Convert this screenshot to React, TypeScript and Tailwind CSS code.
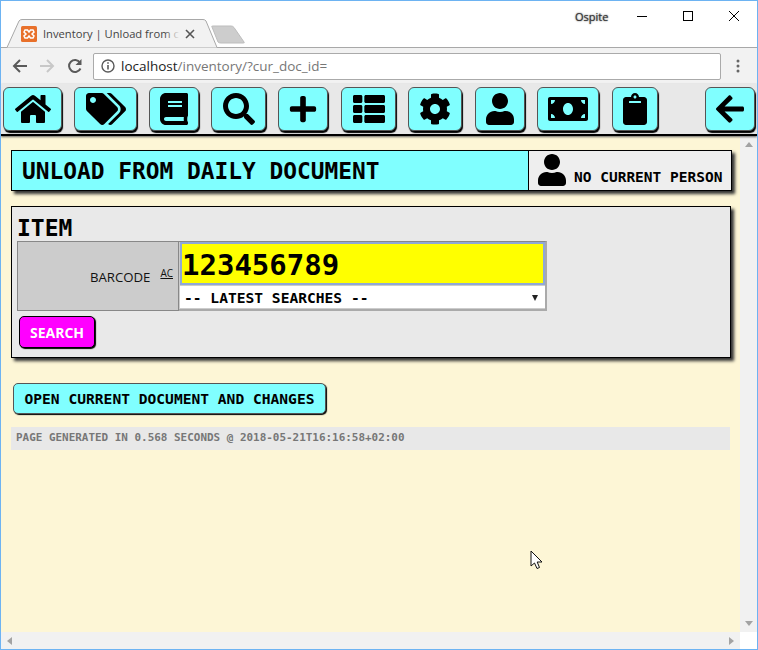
import React from 'react';
import {
  FaHome,
  FaTags,
  FaBook,
  FaSearch,
  FaPlus,
  FaThList,
  FaCog,
  FaUser,
  FaMoneyBill,
  FaClipboard,
  FaArrowLeft,
} from 'react-icons/fa';

const mono = "font-['DejaVu_Sans_Mono','Liberation_Mono',monospace]";
const ui = "font-['Open_Sans','Liberation_Sans',sans-serif]";

const navItems = [
  { icon: FaHome, cls: 'w-[59px] mr-[12px]', size: 36 },
  { icon: FaTags, cls: 'w-[63px] mr-[12px]', size: 40 },
  { icon: FaBook, cls: 'w-[50px] mr-[12px]', size: 32 },
  { icon: FaSearch, cls: 'w-[55px] mr-[12px]', size: 32 },
  { icon: FaPlus, cls: 'w-[50px] mr-[13px]', size: 30 },
  { icon: FaThList, cls: 'w-[55px] mr-[12px]', size: 32 },
  { icon: FaCog, cls: 'w-[54px] mr-[13px]', size: 32 },
  { icon: FaUser, cls: 'w-[50px] mr-[12px]', size: 32 },
  { icon: FaMoneyBill, cls: 'w-[62px] mr-[13px]', size: 40 },
  { icon: FaClipboard, cls: 'w-[46px]', size: 32 },
];

const NavButton: React.FC<{ icon: React.ElementType; cls: string; size: number }> = ({ icon: Icon, cls, size }) => (
  <div className={`h-[44px] flex items-center justify-center rounded-[6px] border border-[#555] bg-[#80ffff] shadow-[1px_2px_1px_#000] ${cls}`}>
    <Icon size={size} color="#000" />
  </div>
);

const BrowserChrome: React.FC = () => (
  <div className="shrink-0">
    {/* title bar + tab */}
    <div className="relative h-[46px] bg-white border-b border-[#a8a8a8] box-content">
      <svg className="absolute left-[5px] top-[17px]" width="240" height="30" viewBox="0 0 240 30">
        <path d="M1 29.5 L13 3 Q14 1.5 16 1.5 L197 1.5 Q199 1.5 200 3 L211 29.5" fill="#f2f2f2" stroke="#a8a8a8" />
        <path d="M206 9 Q205 8 207 8 L225 8 Q227 8 228 9.5 L238 24 Q239 25 237 25 L215 25 Q213 25 212 24 Z" fill="#cdcdcd" stroke="#bdbdbd" />
      </svg>
      <svg className="absolute left-[20px] top-[25px]" width="16" height="16" viewBox="0 0 16 16">
        <rect width="16" height="16" rx="1.5" fill="#e8702a" />
        <path d="M4 4 L6.5 4 L8 6 L9.5 4 L12 4 L13 6 L11 8 L13 10 L12 12 L9.5 12 L8 10 L6.5 12 L4 12 L3 10 L5 8 L3 6 Z" fill="none" stroke="#fff" strokeWidth="1.5" />
      </svg>
      <div className={`absolute left-[42px] top-[24px] w-[138px] h-[18px] whitespace-nowrap text-[11.2px] leading-[18px] text-[#444] ${ui}`}>
        Inventory | Unload from c
      </div>
      <div className="absolute left-[163px] top-[24px] w-[16px] h-[18px] bg-gradient-to-r from-transparent to-[#f2f2f2]" />
      <svg className="absolute left-[184px] top-[28px]" width="10" height="10" viewBox="0 0 10 10">
        <path d="M1 1 L9 9 M9 1 L1 9" stroke="#555" strokeWidth="1.6" />
      </svg>
      <div className={`absolute left-[574px] top-[9px] text-[11px] leading-[14px] text-[#333] ${ui} [text-shadow:0_0_2px_#888,0_0_1px_#888]`}>Ospite</div>
      <svg className="absolute left-[636px] top-[7px]" width="110" height="16" viewBox="0 0 110 16">
        <path d="M0 8.5 H10" stroke="#000" />
        <rect x="46.5" y="3.5" width="9" height="9" fill="none" stroke="#000" />
        <path d="M92 3 L102 13 M102 3 L92 13" stroke="#000" />
      </svg>
    </div>
    {/* address bar */}
    <div className="h-[36px] bg-[#f2f2f2] flex items-center relative">
      <svg className="ml-[11px] mr-[11px]" width="16" height="16" viewBox="0 0 16 16">
        <path d="M15 8 H2 M8 2 L2 8 L8 14" fill="none" stroke="#5a5a5a" strokeWidth="2" />
      </svg>
      <svg className="mr-[12px]" width="16" height="16" viewBox="0 0 16 16">
        <path d="M1 8 H14 M8 2 L14 8 L8 14" fill="none" stroke="#c8c8c8" strokeWidth="2" />
      </svg>
      <svg className="mr-[10px]" width="16" height="16" viewBox="0 0 16 16">
        <path d="M13.5 10.5 A6 6 0 1 1 13 4.5" fill="none" stroke="#5a5a5a" strokeWidth="2" />
        <path d="M14.5 1 V7 H8.5 Z" fill="#5a5a5a" />
      </svg>
      <div className="w-[628px] h-[27px] bg-white border border-[#aaa] rounded-[2px] flex items-center">
        <svg className="ml-[7px] mr-[6px]" width="14" height="14" viewBox="0 0 14 14">
          <circle cx="7" cy="7" r="6" fill="none" stroke="#5a5a5a" strokeWidth="1.4" />
          <path d="M7 6 V10.5 M7 3.2 V4.8" stroke="#5a5a5a" strokeWidth="1.6" />
        </svg>
        <span className={`text-[13.5px] leading-[18px] text-[#777] ${ui}`}>
          <span className="text-[#222]">localhost</span>/inventory/?cur_doc_id=
        </span>
      </div>
      <svg className="ml-[15px]" width="4" height="14" viewBox="0 0 4 14">
        <circle cx="2" cy="2" r="1.5" fill="#666" />
        <circle cx="2" cy="7" r="1.5" fill="#666" />
        <circle cx="2" cy="12" r="1.5" fill="#666" />
      </svg>
    </div>
  </div>
);

const App: React.FC = () => {
  return (
    <div className="relative w-[758px] h-[650px] overflow-hidden bg-white border border-[#6db3f2] flex flex-col">
      <BrowserChrome />

      {/* nav bar */}
      <div className="shrink-0 h-[52px] bg-[#e8e8e8] flex items-start pt-[3px] pl-[2px] pr-[2px] border-b-2 border-black box-border shadow-[0_1px_2px_#666] z-10">
        {navItems.map((item, i) => (
          <NavButton key={i} icon={item.icon} cls={item.cls} size={item.size} />
        ))}
        <div className="ml-auto">
          <NavButton icon={FaArrowLeft} cls="w-[50px]" size={32} />
        </div>
      </div>

      <div className="flex-1 flex min-h-0">
        {/* page */}
        <div className="flex-1 bg-[#fdf6d6] pl-[10px] pr-[9px] pt-[14px] min-w-0">
          <div className="flex h-[41px] w-[721px] border border-black shadow-[3px_3px_3px_#333]">
            <div className={`flex-1 bg-[#80ffff] flex items-center pl-[10px] pt-[2px] text-[22.85px] font-bold text-black ${mono}`}>
              UNLOAD FROM DAILY DOCUMENT
            </div>
            <div className={`w-[203px] bg-[#eee] border-l border-black flex items-end pl-[7px] pb-[4px] text-[14.5px] leading-[18px] font-bold text-black ${mono}`}>
              <FaUser size={32} color="#000" className="mr-[6px]" />
              <span>NO CURRENT PERSON</span>
            </div>
          </div>

          <div className="mt-[15px] w-[720px] h-[152px] bg-[#e9e9e9] border border-black shadow-[3px_3px_3px_#333] pl-[5px] pt-[7px]">
            <div className={`h-[27px] text-[23px] leading-[29px] font-bold text-black ${mono}`}>ITEM</div>
            <div className="flex w-[530px] h-[70px]">
              <div className="w-[162px] bg-[#ccc] border border-[#888] flex items-center justify-end pr-[5px] pt-[4px]">
                <span className={`text-[13.2px] text-[#111] ${ui}`}>BARCODE</span>
                <span className={`ml-[10px] mb-[10px] text-[10px] leading-[12px] underline text-[#111] ${ui}`}>AC</span>
              </div>
              <div className="flex-1 bg-[#ccc] border-t border-t-[#888] border-b-2 border-b-[#aaa] border-r-2 border-r-[#aaa] pl-[1px] flex flex-col">
                <div className={`h-[43px] bg-[#ffff00] border-2 border-[#8fa8d8] pt-[5px] flex items-center text-[29px] font-bold text-black ${mono}`}>
                  123456789
                </div>
                <div className={`mt-[1px] h-[22px] bg-white flex items-center justify-between pl-[4px] pr-[7px] pt-[2px] text-[14.6px] font-bold text-black ${mono}`}>
                  <span>-- LATEST SEARCHES --</span>
                  <svg width="6" height="6" viewBox="0 0 6 6">
                    <path d="M0 0 H6 L3 6 Z" fill="#222" />
                  </svg>
                </div>
              </div>
            </div>
            <div className={`mt-[5px] ml-[2px] w-[76px] h-[32px] bg-[#ff00ff] border border-black rounded-[5px] shadow-[1px_1px_1px_#000] flex items-center justify-center text-[14px] font-bold text-white ${ui}`}>
              SEARCH
            </div>
          </div>

          <div className={`mt-[25px] ml-[2px] w-[313px] h-[31px] bg-[#80ffff] border border-[#555] rounded-[5px] shadow-[1px_1px_1px_#000] flex items-center justify-center text-[14.6px] font-bold text-black ${mono}`}>
            OPEN CURRENT DOCUMENT AND CHANGES
          </div>

          <div className={`mt-[13px] w-[719px] h-[23px] bg-[#e8e8e8] flex items-center pl-[5px] text-[10.95px] font-bold text-[#777] ${mono}`}>
            PAGE GENERATED IN 0.568 SECONDS @ 2018-05-21T16:16:58+02:00
          </div>
        </div>

        {/* vertical scrollbar */}
        <div className="shrink-0 w-[17px] bg-[#f1f1f1] flex flex-col items-center justify-between py-[6px]">
          <svg width="8" height="5" viewBox="0 0 8 5"><path d="M4 0 L8 5 H0 Z" fill="#a3a3a3" /></svg>
          <svg width="8" height="5" viewBox="0 0 8 5"><path d="M0 0 H8 L4 5 Z" fill="#a3a3a3" /></svg>
        </div>
      </div>

      {/* horizontal scrollbar */}
      <div className="shrink-0 h-[17px] flex">
        <div className="flex-1 bg-[#f1f1f1] flex items-center justify-between px-[6px]">
          <svg width="5" height="8" viewBox="0 0 5 8"><path d="M5 0 V8 L0 4 Z" fill="#a3a3a3" /></svg>
          <svg width="5" height="8" viewBox="0 0 5 8"><path d="M0 0 V8 L5 4 Z" fill="#a3a3a3" /></svg>
        </div>
        <div className="w-[17px] bg-white" />
      </div>

      {/* mouse pointer */}
      <svg className="absolute left-[529px] top-[549px]" width="14" height="20" viewBox="0 0 14 20">
        <path d="M1 1 L1 16 L4.5 13 L7 18.5 L9.5 17.5 L7.2 12 L12 12 Z" fill="#fff" stroke="#111" />
      </svg>
    </div>
  );
};

export default App;
